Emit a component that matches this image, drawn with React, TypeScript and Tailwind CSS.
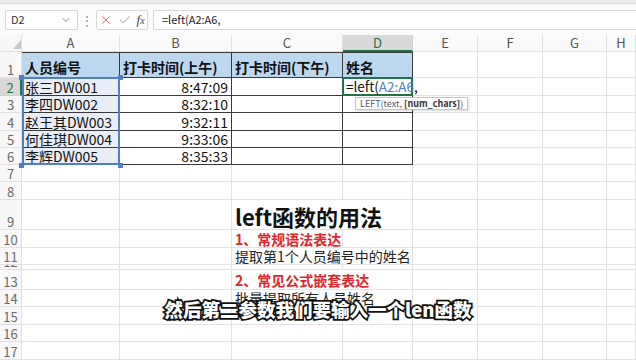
import React from "react";
import { X, Check, ChevronDown } from "lucide-react";

// Column widths / row heights tuned to the sheet in the capture
const COLS = ["A", "B", "C", "D", "E", "F", "G", "H"];

const DATA = [
  { id: "张三DW001", time: "8:47:09" },
  { id: "李四DW002", time: "8:32:10" },
  { id: "赵王其DW003", time: "9:32:11" },
  { id: "何佳琪DW004", time: "9:33:06" },
  { id: "李辉DW005", time: "8:35:33" },
];

const ROW_H = [18, 17, 18, 17, 17];

const grid = "border-r border-b border-[#e2e2e2]";
const black = "border-r border-b border-[#3a3a3a]";

function RowNum({ n, active, full }: { n: number; active?: boolean; full?: boolean }) {
  return (
    <div
      className={`${full ? "h-full " : ""}flex items-end justify-center overflow-hidden border-r border-b text-[13px] leading-[15px] ${
        active
          ? "bg-[#d9d9d9] border-[#d0d0d0] border-r-2 border-r-[#217346] text-[#217346]"
          : "bg-[#f8f8f8] border-[#e0e0e0] text-[#6a6a6a]"
      }`}
    >
      {n}
    </div>
  );
}

function Empty({ cols }: { cols: number }) {
  return (
    <>
      {Array.from({ length: cols }).map((_, i) => (
        <div key={i} className={grid} />
      ))}
    </>
  );
}

export default function App() {
  return (
    <div className="relative w-[636px] h-[360px] overflow-hidden bg-white font-['Noto_Sans_CJK_SC','Noto_Sans',sans-serif] text-[#111]">
      {/* top strip */}
      <div className="h-[4px] bg-[#ececec] border-b border-[#d8d8d8]" />

      {/* formula bar */}
      <div className="h-[31px] flex items-center pl-[5px] gap-[5px] bg-[#fbfbfb]">
        <div className="w-[73px] h-[20px] flex items-center justify-between px-[5px] bg-white border border-[#d6d6d6] rounded-[2px] text-[11px] text-[#333]">
          <span>D2</span>
          <ChevronDown size={12} strokeWidth={1.5} className="text-[#666]" />
        </div>
        <div className="w-[8px] flex justify-center text-[12px] text-[#888] leading-none">⋮</div>
        <div className="w-[52px] h-[20px] flex items-center justify-around bg-white border border-[#d6d6d6] rounded-[2px]">
          <X size={14} strokeWidth={1.4} className="text-[#e05a5a]" />
          <Check size={14} strokeWidth={1.4} className="text-[#5aa55a]" />
          <span className="font-['Liberation_Serif',serif] italic text-[13px] text-[#444] leading-none">
            f<span className="text-[10px]">x</span>
          </span>
        </div>
        <div className="flex-1 h-[20px] flex items-center pl-[8px] bg-white border border-[#d6d6d6] border-r-0 rounded-l-[2px] text-[11px] text-[#222]">
          =left(A2:A6,
        </div>
      </div>

      {/* sheet */}
      <div className="grid grid-cols-[22px_98px_112px_111px_70px_65px_65px_64px_1fr] grid-rows-[17px_26px_18px_17px_18px_17px_17px_17px_18px_30px_18px_17px_5px_20px_17px_18px_17px_18px]">
        {/* column header row */}
        <div className="relative bg-[#f8f8f8] border-r border-b border-[#e0e0e0]">
          <svg className="absolute left-[13px] top-[5px]" width="8" height="9" viewBox="0 0 8 9">
            <polygon points="8,0 8,9 0,9" fill="#c8c8c8" />
          </svg>
        </div>
        {COLS.map((c) => (
          <div
            key={c}
            className={`flex items-center justify-center text-[13px] border-r border-b ${
              c === "D"
                ? "bg-[#d9d9d9] border-[#d0d0d0] border-b-2 border-b-[#217346] text-[#217346]"
                : "bg-[#fafafa] border-[#e0e0e0] text-[#555]"
            }`}
          >
            {c}
          </div>
        ))}

        {/* row 1: headers */}
        <RowNum n={1} />
        {["人员编号", "打卡时间(上午)", "打卡时间(下午)", "姓名"].map((h) => (
          <div
            key={h}
            className={`${black} border-t flex items-end pb-[3px] pl-[3px] bg-[#bdd7ee] text-[14px] font-bold leading-none whitespace-nowrap overflow-hidden`}
          >
            {h}
          </div>
        ))}
        <Empty cols={4} />

        {/* rows 2-6: data */}
        {DATA.map((d, i) => (
          <React.Fragment key={d.id}>
            <div style={{ gridRow: i + 3, gridColumn: 1 }}>
              <RowNum n={i + 2} active={i === 0} full />
            </div>
            {i === 0 && (
              <div className="relative col-start-2 row-start-3 row-span-5 flex flex-col bg-[#e9eef6]">
                {DATA.map((r, j) => (
                  <div
                    key={r.id}
                    style={{ height: ROW_H[j] }}
                    className={`${black} flex items-center pl-[3px] text-[14px] leading-none whitespace-nowrap`}
                  >
                    {r.id}
                  </div>
                ))}
                {/* reference highlight of A2:A6 */}
                <div className="absolute inset-0 -top-px border-2 border-[#4f7fc4] pointer-events-none" />
                <span className="absolute -right-[3px] -top-[3px] w-[5px] h-[5px] bg-[#4f7fc4]" />
                <span className="absolute -right-[3px] -bottom-[3px] w-[5px] h-[5px] bg-[#4f7fc4]" />
                <span className="absolute -left-[3px] -bottom-[3px] w-[5px] h-[5px] bg-[#4f7fc4]" />
                <span className="absolute -left-[3px] -top-[3px] w-[5px] h-[5px] bg-[#4f7fc4]" />
              </div>
            )}
            <div
              style={{ gridRow: i + 3, gridColumn: 3 }}
              className={`${black} flex items-center justify-end pr-[3px] text-[14px] leading-none`}
            >
              {d.time}
            </div>
            <div style={{ gridRow: i + 3, gridColumn: 4 }} className={black} />
            {i === 0 ? (
              <div style={{ gridRow: 3, gridColumn: 5 }} className={`${black} relative z-10`}>
                <div className="absolute -inset-px border-2 border-[#217346]" />
                <div className="absolute left-[3px] top-0 h-full flex items-center text-[13.5px] leading-none whitespace-nowrap">
                  =left(<span className="text-[#4f7fc4]">A2:A6</span>,
                </div>
                <div className="absolute left-[12px] top-[19px] px-[4px] h-[13px] flex items-center bg-white border border-[#c6c6c6] shadow-[1px_1px_2px_rgba(0,0,0,0.15)] text-[9px] text-[#555] whitespace-nowrap leading-none">
                  LEFT(text,&nbsp;<span className="font-bold text-[#333]">[num_chars]</span>)
                </div>
              </div>
            ) : (
              <div style={{ gridRow: i + 3, gridColumn: 5 }} className={black} />
            )}
            {COLS.slice(4).map((c) => (
              <div key={c} style={{ gridRow: i + 3 }} className={grid} />
            ))}
          </React.Fragment>
        ))}

        {/* row 7, 8 */}
        <RowNum n={7} />
        <Empty cols={8} />
        <RowNum n={8} />
        <Empty cols={8} />

        {/* row 9: title */}
        <RowNum n={9} />
        <Empty cols={2} />
        <div className={`${grid} col-span-2 flex items-end pb-[2px] pl-[3px] text-[22px] font-bold leading-none whitespace-nowrap`}>
          left函数的用法
        </div>
        <Empty cols={4} />

        {/* row 10 */}
        <RowNum n={10} />
        <Empty cols={2} />
        <div className={`${grid} flex items-center pl-[3px] text-[14px] font-bold text-[#e0262c] leading-none whitespace-nowrap`}>
          1、常规语法表达
        </div>
        <Empty cols={5} />

        {/* row 11 */}
        <RowNum n={11} />
        <Empty cols={2} />
        <div className={`${grid} col-span-2 flex items-center pl-[3px] text-[14px] text-[#222] leading-none whitespace-nowrap`}>
          提取第1个人员编号中的姓名
        </div>
        <Empty cols={4} />

        {/* row 12 (nearly hidden) */}
        <RowNum n={12} />
        <Empty cols={8} />

        {/* row 13 */}
        <RowNum n={13} />
        <Empty cols={2} />
        <div className={`${grid} col-span-2 flex items-center pl-[3px] text-[14px] font-bold text-[#e0262c] leading-none whitespace-nowrap`}>
          2、常见公式嵌套表达
        </div>
        <Empty cols={4} />

        {/* row 14 */}
        <RowNum n={14} />
        <Empty cols={2} />
        <div className={`${grid} col-span-2 flex items-center pl-[3px] text-[14px] text-[#222] leading-none whitespace-nowrap`}>
          批量提取所有人员姓名
        </div>
        <Empty cols={4} />

        {[15, 16, 17].map((n) => (
          <React.Fragment key={n}>
            <RowNum n={n} />
            <Empty cols={8} />
          </React.Fragment>
        ))}
      </div>

      {/* video subtitle */}
      <div className="absolute left-0 right-0 top-[300px] text-center text-[18.5px] font-black text-white leading-none whitespace-nowrap [-webkit-text-stroke:3.5px_#111] [paint-order:stroke_fill] z-20">
        然后第二参数我们要输入一个len函数
      </div>
    </div>
  );
}
